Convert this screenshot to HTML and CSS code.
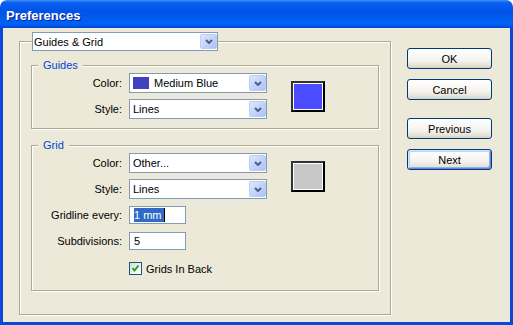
FILE: index.html
```html
<!DOCTYPE html>
<html lang="en">
<head>
    <meta charset="UTF-8">
    <meta name="viewport" content="width=device-width, initial-scale=1.0">
    <title>Preferences</title>
    <link rel="stylesheet" href="styles.css">
</head>
<body>
    <!-- 对话框窗口 -->
    <div class="window">
        <div class="titlebar">Preferences</div>

        <div class="client">
            <!-- 左侧：设置分组 -->
            <fieldset class="group outer">
                <legend class="outer-legend">
                    <div class="combo combo-page">
                        <span class="combo-text">Guides &amp; Grid</span>
                        <span class="combo-btn"><svg width="8" height="5" viewBox="0 0 8 5"><path d="M1 1 L4 4 L7 1" fill="none" stroke="#4d6185" stroke-width="2"/></svg></span>
                    </div>
                </legend>

                <!-- 参考线 -->
                <fieldset class="group sub guides">
                    <legend>Guides</legend>
                    <div class="sub-body">
                        <div class="form">
                            <label class="lbl">Color:</label>
                            <div class="combo">
                                <span class="chip"></span>
                                <span class="combo-text">Medium Blue</span>
                                <span class="combo-btn"><svg width="8" height="5" viewBox="0 0 8 5"><path d="M1 1 L4 4 L7 1" fill="none" stroke="#4d6185" stroke-width="2"/></svg></span>
                            </div>
                            <label class="lbl">Style:</label>
                            <div class="combo">
                                <span class="combo-text">Lines</span>
                                <span class="combo-btn"><svg width="8" height="5" viewBox="0 0 8 5"><path d="M1 1 L4 4 L7 1" fill="none" stroke="#4d6185" stroke-width="2"/></svg></span>
                            </div>
                        </div>
                        <div class="swatch swatch-blue"></div>
                    </div>
                </fieldset>

                <!-- 网格 -->
                <fieldset class="group sub grid">
                    <legend>Grid</legend>
                    <div class="sub-body">
                        <div class="form">
                            <label class="lbl">Color:</label>
                            <div class="combo">
                                <span class="combo-text">Other...</span>
                                <span class="combo-btn"><svg width="8" height="5" viewBox="0 0 8 5"><path d="M1 1 L4 4 L7 1" fill="none" stroke="#4d6185" stroke-width="2"/></svg></span>
                            </div>
                            <label class="lbl">Style:</label>
                            <div class="combo">
                                <span class="combo-text">Lines</span>
                                <span class="combo-btn"><svg width="8" height="5" viewBox="0 0 8 5"><path d="M1 1 L4 4 L7 1" fill="none" stroke="#4d6185" stroke-width="2"/></svg></span>
                            </div>
                        </div>
                        <div class="swatch swatch-gray"></div>
                    </div>
                    <div class="form form-small">
                        <label class="lbl">Gridline every:</label>
                        <div class="field"><span class="sel">1 mm</span><span class="caret"></span></div>
                        <label class="lbl">Subdivisions:</label>
                        <div class="field">5</div>
                    </div>
                    <div class="check-row">
                        <span class="checkbox"><svg width="11" height="11" viewBox="0 0 11 11"><path d="M2.5 5 L4.5 7.5 L8.5 2.5" fill="none" stroke="#21a121" stroke-width="2"/></svg></span>
                        <span>Grids In Back</span>
                    </div>
                </fieldset>
            </fieldset>

            <!-- 右侧：按钮 -->
            <div class="buttons">
                <button class="btn">OK</button>
                <button class="btn">Cancel</button>
                <button class="btn btn-gap">Previous</button>
                <button class="btn btn-default">Next</button>
            </div>
        </div>
    </div>
</body>
</html>
```

FILE: styles.css
```css
/* 页面基础 */
body {
    margin: 0;
    background: #fff;
    font-family: "Liberation Sans", Arial, sans-serif;
    font-size: 11px;
    color: #000;
}

/* 窗口外框 */
.window {
    width: 513px;
    height: 325px;
}

.titlebar {
    height: 28px;
    box-sizing: border-box;
    padding: 4px 0 0 6px;
    line-height: 24px;
    border-radius: 7px 7px 0 0;
    background: linear-gradient(180deg, #3d8ff6 0%, #0a5ef0 10%, #0053e6 40%, #0062f5 85%, #0058ec 93%, #003ed0 100%);
    color: #fff;
    font-size: 13px;
    font-weight: bold;
    text-shadow: 1px 1px 0 #0a1b8f;
}

.client {
    display: flex;
    align-items: flex-start;
    height: 297px;
    box-sizing: border-box;
    padding-top: 4px;
    border: 3px solid #0b47d9;
    border-top: none;
    background: #ece9d8;
}

/* 分组框（蚀刻边线） */
.group {
    margin: 0;
    padding: 0;
    min-width: 0;
    box-sizing: border-box;
    border: 1px solid #aca899;
    box-shadow: inset 1px 1px 0 #fff, 1px 1px 0 #fff;
}

.outer {
    margin-left: 16px;
    width: 372px;
    padding-bottom: 23px;
}

.outer-legend {
    margin-left: 12px;
    padding: 0;
}

.sub {
    margin-left: 11px;
    width: 348px;
}

.sub legend {
    margin-left: 6px;
    padding: 0 5px;
    line-height: 15px;
    color: #0046d5;
    background: #ece9d8;
}

.guides {
    margin-top: 7px;
    padding-bottom: 9px;
}

.grid {
    margin-top: 9px;
    padding-bottom: 15px;
}

.sub-body {
    display: flex;
    align-items: center;
}

/* 标签 + 控件 */
.form {
    display: grid;
    grid-template-columns: 90px 138px;
    grid-auto-rows: 20px;
    column-gap: 7px;
    row-gap: 6px;
    align-items: center;
}

.form-small {
    grid-template-columns: 90px 57px;
    margin-top: 6px;
}

.lbl {
    text-align: right;
}

/* 下拉框 */
.combo {
    display: flex;
    align-items: center;
    height: 20px;
    box-sizing: border-box;
    border: 1px solid #7f9db9;
    background: #fff;
    line-height: 18px;
}

.combo-page {
    width: 186px;
    height: 19px;
}

.combo-text {
    flex: 1;
    padding-left: 3px;
    white-space: nowrap;
}

.combo-page .combo-text {
    padding-left: 1px;
}

.combo-btn {
    display: flex;
    align-items: center;
    justify-content: center;
    width: 17px;
    align-self: stretch;
    box-sizing: border-box;
    margin: 1px 0 1px 0;
    border: 1px solid #bccdf5;
    border-radius: 2px;
    background: linear-gradient(135deg, #dfe8fe 0%, #c3d4fb 50%, #adc2f4 100%);
}

.chip {
    width: 16px;
    height: 12px;
    margin-left: 3px;
    margin-right: 2px;
    background: #4040c0;
}

/* 色块 */
.swatch {
    margin-left: 24px;
    width: 34px;
    height: 31px;
    box-sizing: border-box;
    border: 2px solid #000;
    border-top-color: #333;
    border-left-color: #333;
    box-shadow: inset 0 0 0 1px #fff;
}

.swatch-blue {
    background: #4b4bff;
}

.swatch-gray {
    background: #c8c8c8;
}

/* 文本框 */
.field {
    height: 18px;
    box-sizing: border-box;
    border: 1px solid #7f9db9;
    background: #fff;
    padding-left: 4px;
    line-height: 16px;
    display: flex;
    align-items: center;
}

.sel {
    background: #316ac5;
    color: #fff;
    line-height: 14px;
    padding-right: 2px;
}

.caret {
    width: 1px;
    height: 14px;
    background: #000;
}

/* 复选框 */
.check-row {
    display: flex;
    align-items: center;
    height: 13px;
    margin: 11px 0 0 97px;
}

.checkbox {
    display: flex;
    align-items: center;
    justify-content: center;
    width: 13px;
    height: 13px;
    box-sizing: border-box;
    margin-right: 4px;
    border: 1px solid #1c5180;
    background: linear-gradient(135deg, #dcdcd7, #fff);
}

/* 右侧按钮 */
.buttons {
    display: flex;
    flex-direction: column;
    margin: 16px 0 0 16px;
}

.btn {
    width: 85px;
    height: 21px;
    box-sizing: border-box;
    padding: 0;
    border: 1px solid #003c74;
    border-radius: 3px;
    background: linear-gradient(180deg, #fff 0%, #f4f3ee 60%, #e6e3d8 85%, #d6d0c5 100%);
    font: inherit;
    color: #000;
}

.btn + .btn {
    margin-top: 10px;
}

.btn + .btn-gap {
    margin-top: 18px;
}

.btn-default {
    box-shadow: inset 1px 1px 0 #cee7ff, inset -1px -1px 0 #6982ee, inset 2px 2px 0 #bcd4f6, inset -2px -2px 0 #8cb0f0;
}
```
